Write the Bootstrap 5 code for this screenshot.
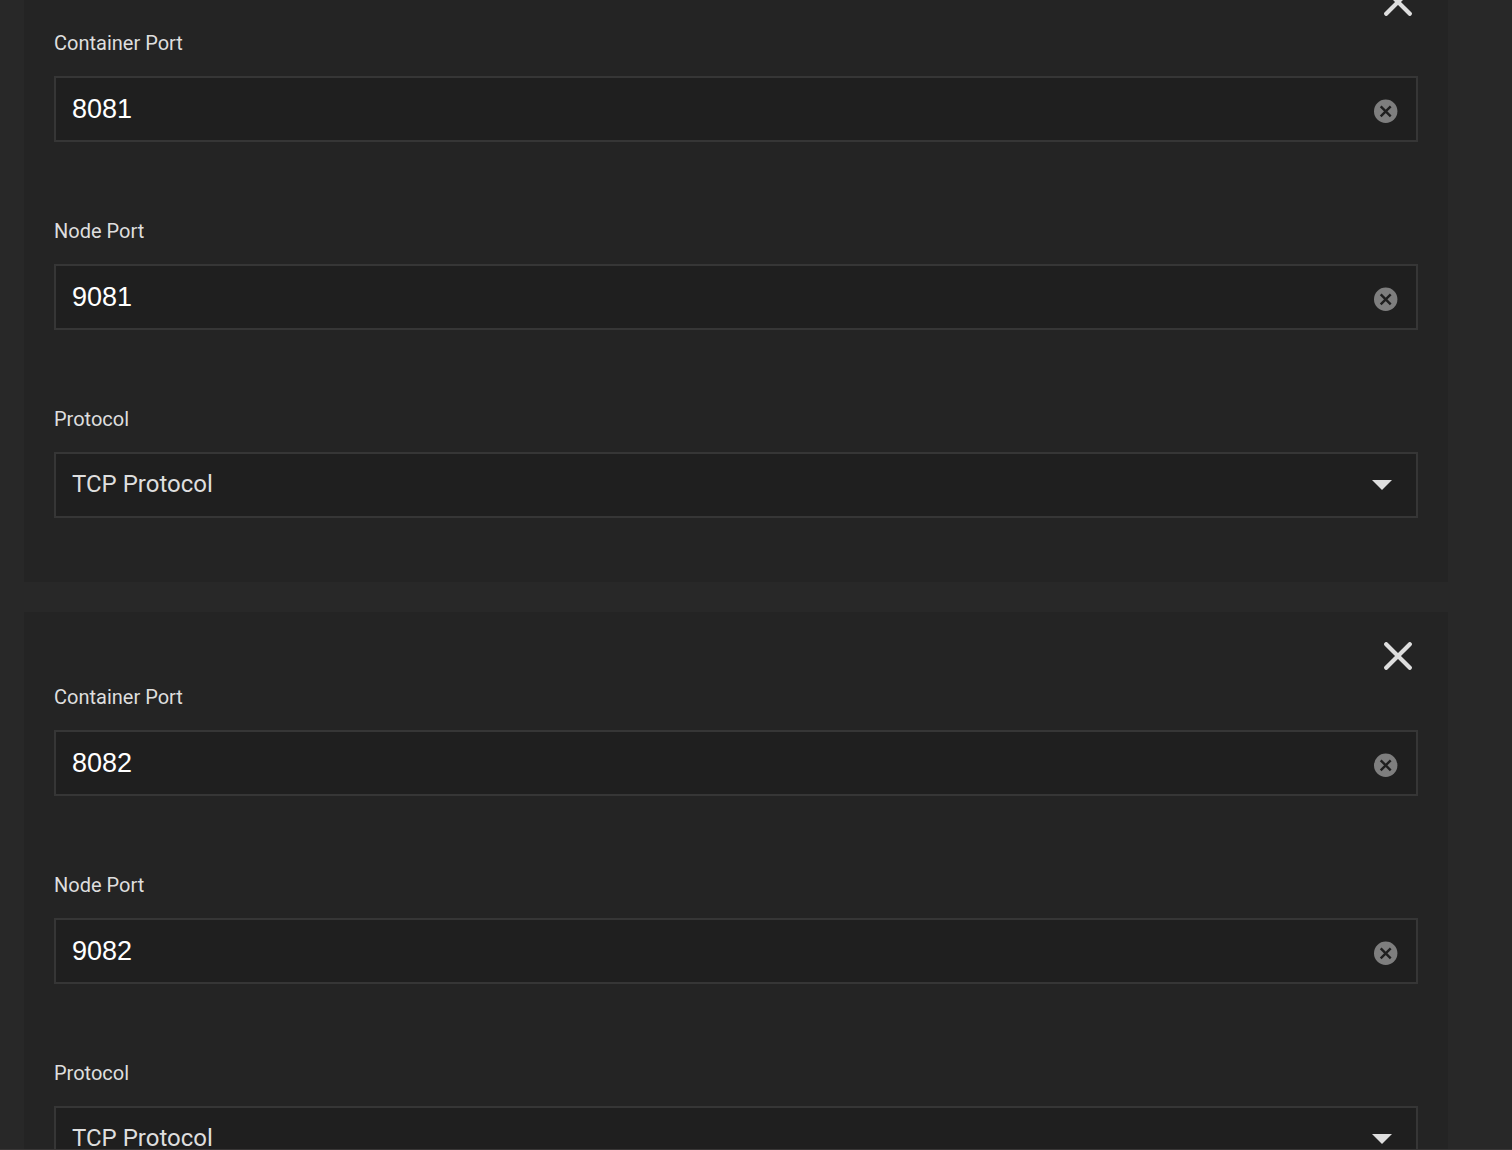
<!DOCTYPE html>
<html lang="en" data-bs-theme="dark">
<head>
<meta charset="utf-8">
<meta name="viewport" content="width=device-width, initial-scale=1">
<title>Port mappings</title>
<link href="https://cdn.jsdelivr.net/npm/bootstrap@5.3.0/dist/css/bootstrap.min.css" rel="stylesheet">
<style>
  body { background: #282828; color: #dedede; font-family: Roboto, sans-serif; }
  .port-view { border-bottom: 1px solid #393737; }
  .port-list { padding: 0 64px 0 24px; gap: 30px; margin-top: -42px; }
  .port-panel { background: #242424; padding: 30px; }
  .panel-head { height: 40px; padding-right: 6px; }
  .port-fields { gap: 40px; }
  .port-field { padding-bottom: 34px; }
  .port-field .form-label { font-size: 20px; line-height: 30px; margin-bottom: 18px; }
  .port-field .form-control, .port-field .form-select {
    height: 66px; border: 2px solid #363636; background: #1f1f1f; padding: 0 72px 0 16px;
  }
  .port-field .form-control { font-family: "Liberation Sans", sans-serif; font-size: 27px; color: #fff; }
  .port-field .form-select { font-size: 24px; color: #dedede; padding-bottom: 2px; }
  .clear-btn { right: 20px; top: 23px; }
  .caret-icon { right: 26px; top: 28px; }
  .icon-btn { line-height: 0; }
</style>
<script src="https://cdn.jsdelivr.net/npm/bootstrap@5.3.0/dist/js/bootstrap.bundle.min.js"></script>
</head>
<body>
<svg class="d-none" aria-hidden="true">
  <symbol id="i-close" viewBox="0 0 28 28"><path d="M2.2 2.2 25.8 25.8M25.8 2.2 2.2 25.8" fill="none" stroke="#dedede" stroke-width="4.2" stroke-linecap="round"/></symbol>
  <symbol id="i-clear" viewBox="0 0 24 24"><circle cx="11.7" cy="12.3" r="11.7" fill="#7e7e7e"/><path d="M6.7 7.3 16.7 17.3M16.7 7.3 6.7 17.3" stroke="#1f1f1f" stroke-width="2.4"/></symbol>
  <symbol id="i-caret" viewBox="0 0 20 10"><path d="M0 0H20L10 10Z" fill="#dedede"/></symbol>
</svg>
<main class="port-view vh-100 overflow-hidden">
  <form class="port-list d-flex flex-column">
    <section class="port-panel">
      <div class="panel-head d-flex justify-content-end align-items-start">
        <button type="button" class="btn icon-btn border-0 p-0" aria-label="Remove"><svg width="28" height="28"><use href="#i-close"/></svg></button>
      </div>
      <div class="port-fields d-flex flex-column">
        <div class="port-field">
          <label class="form-label d-block" for="cport1">Container Port</label>
          <div class="position-relative">
            <input class="form-control rounded-0" id="cport1" type="text" inputmode="numeric" value="8081">
            <button type="button" class="btn icon-btn clear-btn border-0 p-0 position-absolute" aria-label="Clear"><svg width="24" height="24"><use href="#i-clear"/></svg></button>
          </div>
        </div>
        <div class="port-field">
          <label class="form-label d-block" for="nport1">Node Port</label>
          <div class="position-relative">
            <input class="form-control rounded-0" id="nport1" type="text" inputmode="numeric" value="9081">
            <button type="button" class="btn icon-btn clear-btn border-0 p-0 position-absolute" aria-label="Clear"><svg width="24" height="24"><use href="#i-clear"/></svg></button>
          </div>
        </div>
        <div class="port-field">
          <label class="form-label d-block" for="proto1">Protocol</label>
          <div class="position-relative">
            <select class="form-select rounded-0" id="proto1"><option>TCP Protocol</option></select>
            <svg class="caret-icon position-absolute pe-none" width="20" height="10"><use href="#i-caret"/></svg>
          </div>
        </div>
      </div>
    </section>
    <section class="port-panel">
      <div class="panel-head d-flex justify-content-end align-items-start">
        <button type="button" class="btn icon-btn border-0 p-0" aria-label="Remove"><svg width="28" height="28"><use href="#i-close"/></svg></button>
      </div>
      <div class="port-fields d-flex flex-column">
        <div class="port-field">
          <label class="form-label d-block" for="cport2">Container Port</label>
          <div class="position-relative">
            <input class="form-control rounded-0" id="cport2" type="text" inputmode="numeric" value="8082">
            <button type="button" class="btn icon-btn clear-btn border-0 p-0 position-absolute" aria-label="Clear"><svg width="24" height="24"><use href="#i-clear"/></svg></button>
          </div>
        </div>
        <div class="port-field">
          <label class="form-label d-block" for="nport2">Node Port</label>
          <div class="position-relative">
            <input class="form-control rounded-0" id="nport2" type="text" inputmode="numeric" value="9082">
            <button type="button" class="btn icon-btn clear-btn border-0 p-0 position-absolute" aria-label="Clear"><svg width="24" height="24"><use href="#i-clear"/></svg></button>
          </div>
        </div>
        <div class="port-field">
          <label class="form-label d-block" for="proto2">Protocol</label>
          <div class="position-relative">
            <select class="form-select rounded-0" id="proto2"><option>TCP Protocol</option></select>
            <svg class="caret-icon position-absolute pe-none" width="20" height="10"><use href="#i-caret"/></svg>
          </div>
        </div>
      </div>
    </section>
  </form>
</main>
</body>
</html>
